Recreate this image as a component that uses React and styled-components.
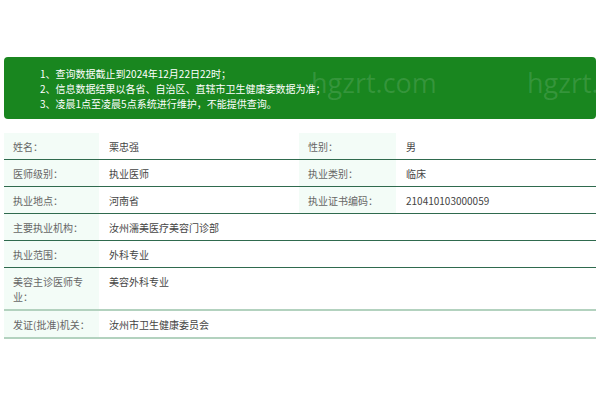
import React from 'react'
import styled, { createGlobalStyle } from 'styled-components'

const GlobalStyle = createGlobalStyle`
  html, body {
    margin: 0;
    padding: 0;
    background: #fff;
  }
  body {
    font-family: "Noto Sans CJK SC", "Noto Sans", sans-serif;
  }
`

const Page = styled.div`
  padding: 57px 4px 0;
  width: 592px;
`

const Notice = styled.div`
  position: relative;
  overflow: hidden;
  background: #19861f;
  border-radius: 4px;
  height: 62px;
  box-sizing: border-box;
  padding: 9px 0 0 36px;
  color: #fff;
  font-size: 10px;
  line-height: 15px;
`

const NoticeLine = styled.div`
  position: relative;
  z-index: 1;
  white-space: nowrap;
`

const Watermark = styled.span`
  position: absolute;
  top: 11px;
  left: ${p => p.$left}px;
  font-family: "Open Sans", "Noto Sans", sans-serif;
  font-size: 27px;
  line-height: 30px;
  color: rgba(255, 255, 255, 0.13);
  pointer-events: none;
`

const Table = styled.table`
  margin-top: 14px;
  width: 592px;
  border-collapse: collapse;
  table-layout: fixed;
  font-size: 10px;
  line-height: 15px;
`

const Cell = styled.td`
  padding: ${p => (p.$label ? '6px 6px 5px 9px' : '6px 10px 5px')};
  vertical-align: top;
  white-space: ${p => (p.$label ? 'nowrap' : 'normal')};
  border-bottom: ${p => (p.$soft ? '2px solid #b3d2bf' : '1px solid #2f6a4e')};
  color: ${p => (p.$label ? '#666' : '#444')};
  background: ${p => (p.$label ? '#f3fcf7' : 'transparent')};
`

const rows = [
  [['姓名：', '栗忠强'], ['性别：', '男']],
  [['医师级别：', '执业医师'], ['执业类别：', '临床']],
  [['执业地点：', '河南省'], ['执业证书编码：', '210410103000059']],
  [['主要执业机构：', '汝州濡美医疗美容门诊部']],
  [['执业范围：', '外科专业']],
  [[<>美容主诊医师专<br />业：</>, '美容外科专业']],
  [['发证(批准)机关：', '汝州市卫生健康委员会']]
]

export default function App() {
  return (
    <Page>
      <GlobalStyle />
      <Notice>
        <NoticeLine>1、查询数据截止到2024年12月22日22时；</NoticeLine>
        <NoticeLine>2、信息数据结果以各省、自治区、直辖市卫生健康委数据为准；</NoticeLine>
        <NoticeLine>3、凌晨1点至凌晨5点系统进行维护，不能提供查询。</NoticeLine>
        <Watermark $left={307}>hgzrt.com</Watermark>
        <Watermark $left={523}>hgzrt.com</Watermark>
      </Notice>
      <Table>
        <colgroup>
          <col style={{ width: 95 }} />
          <col style={{ width: 200 }} />
          <col style={{ width: 97 }} />
          <col />
        </colgroup>
        <tbody>
          {rows.map((pairs, i) => {
            const soft = i >= 5
            return (
              <tr key={i}>
                {pairs.map(([label, value], j) => (
                  <React.Fragment key={j}>
                    <Cell $label $soft={soft}>{label}</Cell>
                    <Cell $soft={soft} colSpan={pairs.length === 1 ? 3 : 1}>
                      {value}
                    </Cell>
                  </React.Fragment>
                ))}
              </tr>
            )
          })}
        </tbody>
      </Table>
    </Page>
  )
}
